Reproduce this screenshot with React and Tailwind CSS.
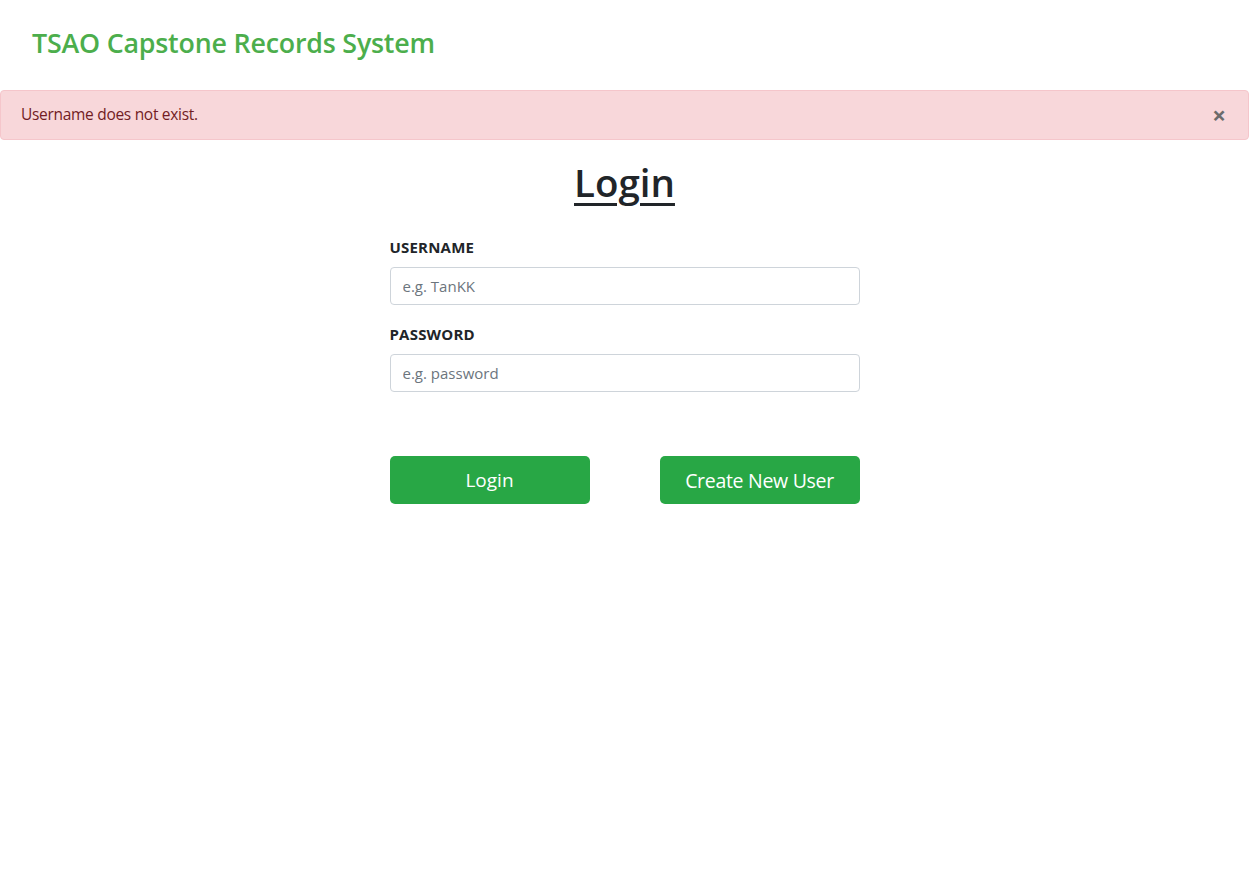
import React from 'react';

const App = () => {
  return (
    <div className="min-h-screen bg-white text-[#212529] font-['Open_Sans','Noto_Sans',sans-serif]">
      <nav className="h-[90px] flex items-center px-8 pb-[4px]">
        <h3 className="text-[26.8px] font-semibold text-[#4cae4c] tracking-[-0.2px]">TSAO Capstone Records System</h3>
      </nav>

      <div className="h-[50px] flex items-center justify-between bg-[#f8d7da] border border-[#f5c6cb] rounded-[4px] pl-5 pr-[22px] text-[#721c24] text-[15.5px]">
        <span className="tracking-[-0.3px]">Username does not exist.</span>
        <button className="text-[#6b6b6b] text-[24px] leading-none font-bold">×</button>
      </div>

      <div className="flex flex-col items-center">
        <h1 className="mt-[19px] text-[38.5px] font-semibold underline underline-offset-[6px] decoration-[3px] leading-[1.2]">Login</h1>

        <form className="w-[470px] mt-[32px] flex flex-col">
          <label className="text-[15px] font-bold tracking-[0.2px] leading-[20px]">USERNAME</label>
          <input
            className="mt-[10px] h-[38px] border border-[#ced4da] rounded-[4px] px-3 text-[15px] placeholder:text-[#6c757d] outline-none"
            placeholder="e.g. TanKK"
          />
          <label className="mt-[19px] text-[15px] font-bold tracking-[0.2px] leading-[20px]">PASSWORD</label>
          <input
            type="password"
            className="mt-[10px] h-[38px] border border-[#ced4da] rounded-[4px] px-3 text-[15px] placeholder:text-[#6c757d] outline-none"
            placeholder="e.g. password"
          />

          <div className="mt-[64px] flex justify-between">
            <button type="button" className="w-[200px] h-[48px] bg-[#28a745] text-white text-[19px] rounded-[5px]">Login</button>
            <button type="button" className="w-[200px] h-[48px] bg-[#28a745] text-white text-[19.5px] rounded-[5px] tracking-[-0.3px]">Create New User</button>
          </div>
        </form>
      </div>
    </div>
  );
};

export default App;
